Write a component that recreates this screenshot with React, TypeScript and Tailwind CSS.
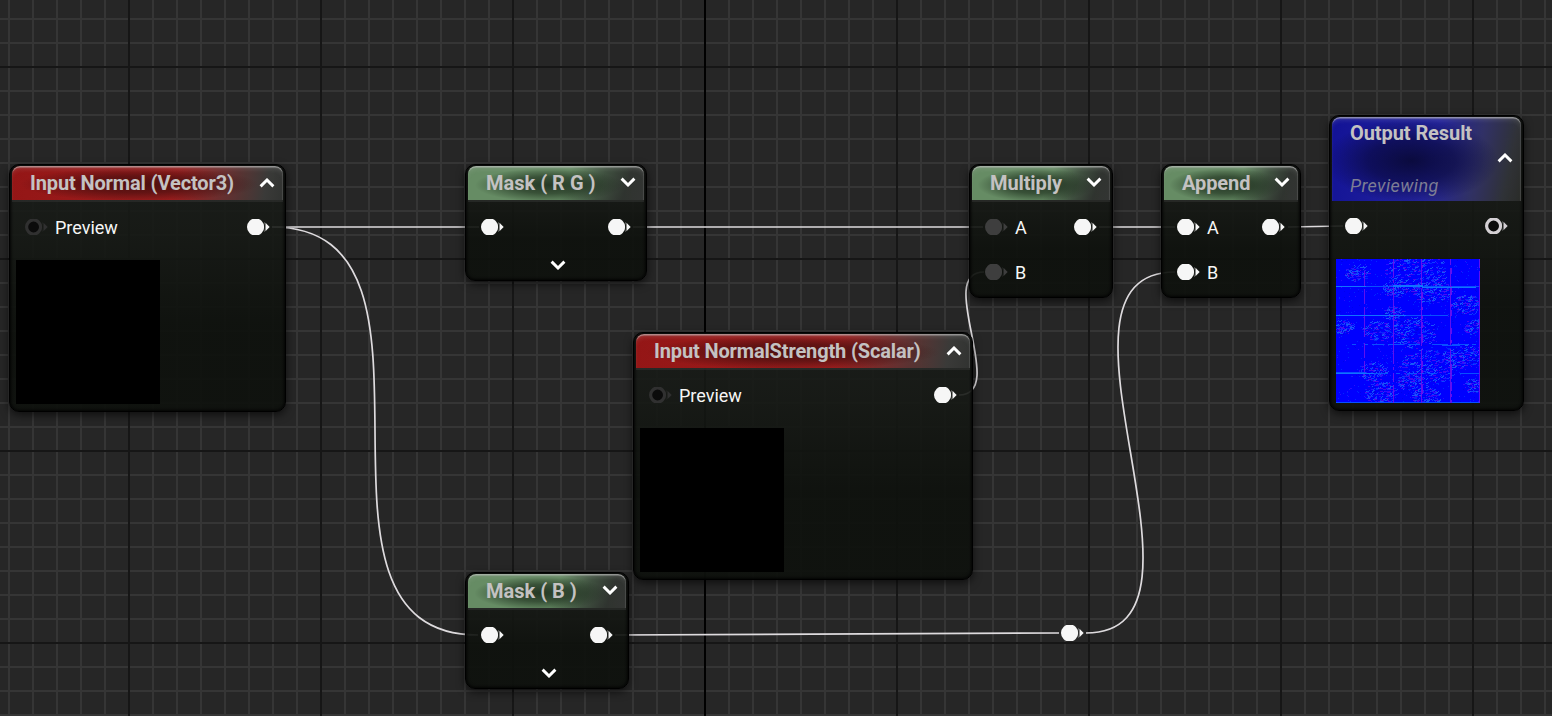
import type { ReactNode } from "react";

type Tone = "red" | "green" | "blue";

const headerTone: Record<Tone, string> = {
  red: "bg-[radial-gradient(ellipse_44%_50%_at_47%_54%,rgba(50,10,10,0.75)_0%,rgba(55,12,12,0.55)_50%,rgba(80,12,12,0)_100%),linear-gradient(100deg,rgba(148,22,22,1)_0%,rgba(156,30,30,1)_60%,rgba(104,50,50,0.95)_79%,rgba(62,62,60,0.9)_93%,rgba(52,54,52,0.9)_100%)]",
  green:
    "bg-[radial-gradient(ellipse_42%_50%_at_46%_56%,rgba(22,36,22,0.8)_0%,rgba(26,42,26,0.6)_50%,rgba(40,60,40,0)_100%),linear-gradient(110deg,rgb(102,140,100)_0%,rgb(102,140,100)_55%,rgba(66,84,66,0.95)_74%,rgba(50,54,50,0.92)_88%,rgba(54,56,54,0.9)_100%)]",
  blue: "bg-[radial-gradient(ellipse_46%_50%_at_42%_52%,rgba(8,8,52,0.9)_0%,rgba(8,8,60,0.65)_50%,rgba(10,10,110,0)_100%),linear-gradient(102deg,rgb(18,18,150)_0%,rgb(36,36,156)_52%,rgba(50,50,104,0.96)_75%,rgba(50,52,58,0.92)_91%,rgba(44,46,42,0.9)_100%)]",
};

function Pin({ kind = "on" }: { kind?: "on" | "dim" | "ring" | "dimRing" }) {
  const ring = kind === "ring" || kind === "dimRing";
  const color = kind === "on" ? "#f6f6f6" : kind === "ring" ? "#d4d0d4" : kind === "dim" ? "#3e3e3e" : "#303030";
  return (
    <svg width="24" height="18" viewBox="0 0 24 18" className="-mr-px block shrink-0">
      <svg x="1" y="1" width="17.4" height="16" viewBox="0 0 17.4 16">
        {ring ? (
          <circle cx="8.6" cy="8" r="7" fill="#0b0b0b" stroke={color} strokeWidth="3.2" />
        ) : (
          <circle cx="8.6" cy="8" r="8.6" fill={color} />
        )}
      </svg>
      <path d="M18 4Q20 9 18 14L20.2 12.4V5.6Z" fill={color} opacity="0.45" />
      <path d="M19.9 5.2L23.7 9L19.9 12.8Z" fill={color} />
    </svg>
  );
}

function Chevron({ up = false }: { up?: boolean }) {
  return (
    <svg width="16" height="10" viewBox="0 0 16 10" className="block shrink-0" fill="none" stroke="#fff" strokeWidth="2.9">
      <path d={up ? "M1.6 8.4L8 2L14.4 8.4" : "M1.6 1.6L8 8L14.4 1.6"} />
    </svg>
  );
}

function Node({
  place,
  tone,
  title,
  note,
  up,
  children,
}: {
  place: string;
  tone: Tone;
  title: string;
  note?: string;
  up?: boolean;
  children: ReactNode;
}) {
  return (
    <section
      className={`absolute flex flex-col rounded-[10px] border border-black bg-[linear-gradient(180deg,rgba(25,28,25,0.9)_0%,rgba(22,25,21,0.9)_25%,rgba(14,17,13,0.93)_65%)] px-0.5 pb-0.5 pt-px shadow-[0_3px_9px_rgba(0,0,0,0.6),inset_0_0_3px_1px_rgba(0,0,0,0.85)] ${place}`}
    >
      <header
        className={`flex shrink-0 justify-between rounded-t-[8px] pl-[18px] pr-[8px] shadow-[inset_0_2px_1px_-0.5px_rgba(190,190,190,0.65),inset_-1px_0_0_rgba(110,110,110,0.3),inset_0_5px_5px_-2px_rgba(200,200,200,0.18)] ${note ? "h-[84px]" : "h-[34px]"} ${headerTone[tone]}`}
      >
        <div className="flex flex-col">
          <h2
            className={`whitespace-pre text-[20px] font-bold text-[#c4c2c2] ${tone === "red" ? "tracking-[-0.14px]" : tone === "blue" ? "tracking-[-0.08px]" : title.length < 9 ? "tracking-[-0.1px]" : ""} ${note ? "leading-[32px]" : "leading-[34px]"}`}
          >
            {title}
          </h2>
          {note && <p className="mt-[21px] text-[18px] italic leading-[32px] tracking-[0.4px] text-[#7d7d94]">{note}</p>}
        </div>
        <div className={note ? "pt-[36px]" : up ? "pt-[12px]" : "pt-[11px]"}>
          <Chevron up={up} />
        </div>
      </header>
      <div className={`h-[2px] shrink-0 ${note ? "" : "bg-[#303230]/60"}`} />
      {children}
    </section>
  );
}

function Label({ children }: { children: ReactNode }) {
  return <span className="ml-[8px] translate-y-[0.5px] text-[18px] leading-[20px] text-[#f6f6f6]">{children}</span>;
}

function InputBody() {
  return (
    <>
      <div className="mt-[14px] flex h-[22px] items-center justify-between pl-[12px] pr-[14px]">
        <div className="flex items-center">
          <Pin kind="dimRing" />
          <Label>Preview</Label>
        </div>
        <Pin />
      </div>
      <div className="ml-[4px] mt-[22px] h-36 w-36 bg-black" />
    </>
  );
}

function MaskBody() {
  return (
    <>
      <div className="mt-[14px] flex h-[22px] items-center justify-between pl-[12px] pr-[14px]">
        <Pin />
        <Pin />
      </div>
      <div className="mt-[22px] flex justify-center pl-[3px]">
        <Chevron />
      </div>
    </>
  );
}

function MathBody({ dim = false }: { dim?: boolean }) {
  return (
    <div className="mt-[14px] flex justify-between pl-[12px] pr-[14px]">
      <div className="flex flex-col gap-[23px]">
        {["A", "B"].map((name) => (
          <div key={name} className="flex h-[22px] items-center">
            <Pin kind={dim ? "dim" : "on"} />
            <Label>{name}</Label>
          </div>
        ))}
      </div>
      <div className="flex h-[22px] items-center">
        <Pin />
      </div>
    </div>
  );
}

// Deterministic speckle for the normal map preview: rough stone with mortar seams.
function buildSpeckle() {
  let seed = 91;
  const rnd = () => {
    seed = (seed * 16807) % 2147483647;
    return seed / 2147483647;
  };
  const colors = ["#0030ff", "#1048ff", "#1c64f8", "#3010ff", "#5008f0", "#0000e8"];
  const paths = colors.map(() => "");
  const patches = [
    [20, 14, 10], [78, 12, 26], [95, 32, 16], [58, 30, 11], [130, 46, 13], [5, 68, 9],
    [40, 72, 12], [76, 74, 19], [137, 68, 9], [124, 97, 16], [90, 108, 23], [36, 113, 12],
    [72, 122, 11], [137, 127, 9], [44, 134, 14], [89, 137, 12], [56, 54, 9],
  ];
  for (const [cx, cy, r] of patches) {
    const n = Math.round(r * 12);
    for (let i = 0; i < n; i++) {
      const a = rnd() * 6.283;
      const d = Math.sqrt(rnd()) * r;
      const x = Math.round(cx + Math.cos(a) * d * 1.2);
      const y = Math.round(cy + Math.sin(a) * d * 0.8);
      const w = 1 + Math.floor(rnd() * 3);
      const k = Math.floor(rnd() * 6);
      paths[k] += k === 2 || k === 1 ? `M${x} ${y}h${w}v-1h1v1h-1v1h-${w}z` : `M${x} ${y}h${w}v1h-${w}z`;
    }
  }
  for (let i = 0; i < 600; i++) {
    const k = [0, 0, 3, 5][Math.floor(rnd() * 4)];
    paths[k] += `M${Math.floor(rnd() * 143)} ${Math.floor(rnd() * 144)}h${1 + Math.floor(rnd() * 2)}v1h-1z`;
  }
  let vertical = "";
  let horizontal = "";
  for (const [x, strong] of [[28, 1], [57, 0], [85, 1], [114, 1], [143, 1]]) {
    for (let y = 0; y < 144; y += 3) {
      const solid = x === 28 && (y < 10 || y > 114) ? 0.1 : strong ? 0.95 : 0.85;
      const w = x > 57 && x < 143 && rnd() < 0.5 ? 2 : 1;
      if (rnd() < solid) vertical += `M${x} ${y}h${w}v3h-${w}z`;
    }
  }
  for (const [y, strong] of [[27, 1], [56, 1], [85, 0], [114, 1], [143, 1]]) {
    for (let x = 0; x < 144; x += 4) {
      const solid = (y === 114 && x > 48) || (y === 56 && x > 106) ? 0.3 : strong ? 0.95 : 0.5;
      if (rnd() < solid) horizontal += `M${x} ${y}h4v1h-4z`;
    }
  }
  return { colors, paths, vertical, horizontal };
}

const speckle = buildSpeckle();

function NormalMap() {
  return (
    <svg width="144" height="144" viewBox="0 0 144 144" className="block bg-[#0000ff]" shapeRendering="crispEdges">
      <g className="blur-[0.35px]">
        {speckle.paths.map((d, i) => (
          <path key={i} d={d} fill={speckle.colors[i]} opacity="0.85" />
        ))}
      </g>
      <path d={speckle.horizontal} fill="#0850ff" />
      <path d={speckle.vertical} fill="#6a10f0" opacity="0.9" />
      <path d="M57 26h30v2h-30zM0 27h30v1h-30zM86 28h54v1h-54zM0 56h70v1h-70zM0 114h38v1h-38z" fill="#1074ff" />
      <path d="M0 113h30v1h-30zM106 86h18v1h-18z" fill="#0850ff" />
    </svg>
  );
}

export default function App() {
  return (
    <main className="relative h-[716px] w-[1552px] overflow-hidden bg-[#262626] font-['Roboto','Liberation_Sans',sans-serif]">
      <svg width="1552" height="716" className="absolute inset-0">
        <defs>
          <pattern id="minor" x="8" y="18" width="24" height="24" patternUnits="userSpaceOnUse">
            <path d="M0 0H24V2H2V24H0Z" fill="#353535" />
          </pattern>
          <pattern id="major" x="128" y="66" width="192" height="192" patternUnits="userSpaceOnUse">
            <path d="M0 0H192V2H2V192H0Z" fill="#161616" />
          </pattern>
        </defs>
        <rect width="1552" height="716" fill="url(#minor)" />
        <rect width="1552" height="716" fill="url(#major)" />
        <rect x="704" width="2" height="716" fill="#000" />
        <g fill="none" stroke="#dedbde" strokeWidth="1.7">
          <path d="M272 227H479" />
          <path d="M272 227C475 227 275 635 478 635" />
          <path d="M633 227H983" />
          <path d="M1099 227H1175" />
          <path d="M1288 227L1343 226" />
          <path d="M959 395C1009 395 934 272 984 272" />
          <path d="M1086 633C1236 633 1025 272 1175 272" />
          <path d="M615 635L1059 633" />
        </g>
      </svg>

      <Node place="left-[9px] top-[164px] h-[248px] w-[277px]" tone="red" title="Input Normal (Vector3)" up>
        <InputBody />
      </Node>
      <Node place="left-[465px] top-[164px] h-[117px] w-[182px]" tone="green" title="Mask ( R G )">
        <MaskBody />
      </Node>
      <Node place="left-[465px] top-[572px] h-[117px] w-[164px]" tone="green" title="Mask ( B )">
        <MaskBody />
      </Node>
      <Node place="left-[633px] top-[332px] h-[248px] w-[340px]" tone="red" title="Input NormalStrength (Scalar)" up>
        <InputBody />
      </Node>
      <Node place="left-[969px] top-[164px] h-[134px] w-[144px]" tone="green" title="Multiply">
        <MathBody dim />
      </Node>
      <Node place="left-[1161px] top-[164px] h-[134px] w-[140px]" tone="green" title="Append">
        <MathBody />
      </Node>
      <Node place="left-[1329px] top-[115px] h-[296px] w-[195px]" tone="blue" title="Output Result" note="Previewing" up>
        <div className="mt-[12px] flex h-[22px] items-center justify-between pl-[12px] pr-[14px]">
          <Pin />
          <Pin kind="ring" />
        </div>
        <div className="ml-[4px] mt-[22px]">
          <NormalMap />
        </div>
      </Node>

      <div className="absolute left-[1060px] top-[624px]">
        <Pin />
      </div>
    </main>
  );
}
